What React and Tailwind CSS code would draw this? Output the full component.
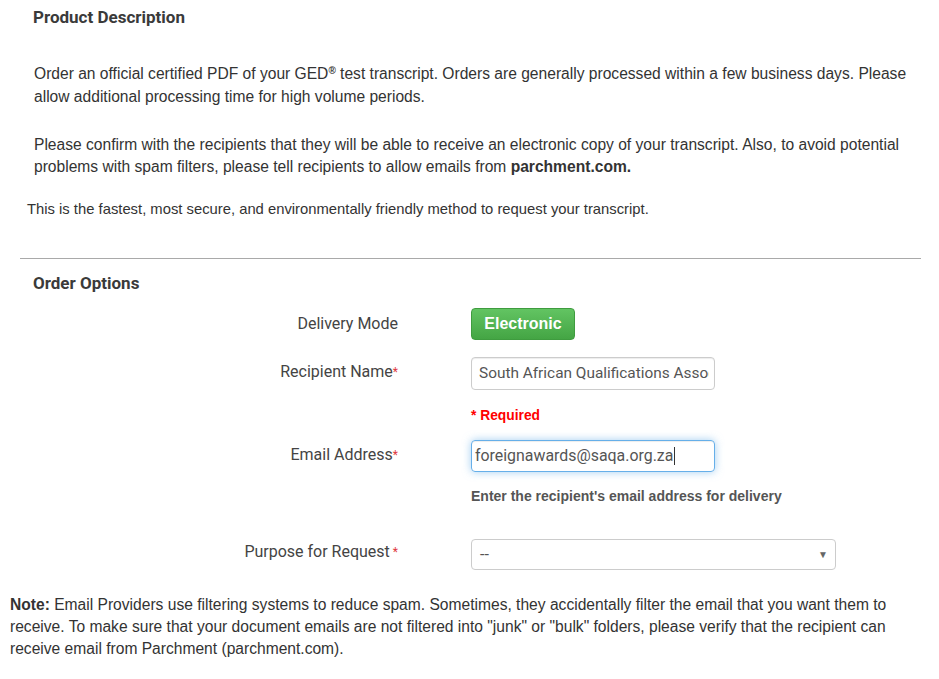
import React from 'react';

const Label = ({ children, required, spaced, pt }) => (
  <div className={`w-[398px] shrink-0 text-right text-[16px] leading-[20px] text-[#444] ${pt}`} style={{ fontFamily: 'Roboto, sans-serif' }}>
    {children}
    {required && <span className="text-[#e0393e] text-[12px] align-top">{spaced ? ' *' : '*'}</span>}
  </div>
);

export default function App() {
  return (
    <div className="w-[939px] h-[679px] overflow-hidden bg-white text-[#333]" style={{ fontFamily: '"Liberation Sans", Arial, sans-serif' }}>
      <h2 className="pl-[33px] pt-[5px] text-[17px] leading-[24px] font-bold text-[#3a3a3a]" style={{ fontFamily: 'Roboto, sans-serif' }}>
        Product Description
      </h2>

      <p className="mt-[33px] pl-[34px] pr-[8px] text-[15.6px] leading-[23px]">
        Order an official certified PDF of your GED<sup className="text-[10px] font-bold">®</sup> test transcript. Orders are generally processed within a few business days. Please allow additional processing time for high volume periods.
      </p>

      <p className="mt-[26px] pl-[34px] pr-[8px] text-[15.6px] leading-[22px]">
        Please confirm with the recipients that they will be able to receive an electronic copy of your transcript. Also, to avoid potential problems with spam filters, please tell recipients to allow emails from <b>parchment.com.</b>
      </p>

      <p className="mt-[21px] pl-[27px] text-[14.8px] leading-[20px]">
        This is the fastest, most secure, and environmentally friendly method to request your transcript.
      </p>

      <hr className="mt-[39px] ml-[20px] w-[901px] border-0 border-t border-[#a9a9a9]" />

      <h2 className="pl-[33px] mt-[12px] text-[17px] leading-[24px] font-bold text-[#3a3a3a]" style={{ fontFamily: 'Roboto, sans-serif' }}>
        Order Options
      </h2>

      <div className="mt-[13px] flex flex-col">
        <div className="flex items-start gap-[73px]">
          <Label pt="pt-[6px]">Delivery Mode</Label>
          <button className="h-[32px] w-[104px] rounded-[4px] border border-[#3f9c3f] bg-gradient-to-b from-[#62c462] to-[#44a544] text-[16px] font-bold text-white">
            Electronic
          </button>
        </div>

        <div className="mt-[17px] flex items-start gap-[73px]">
          <Label required pt="pt-[5px]">Recipient Name</Label>
          <div>
            <div className="h-[33px] w-[244px] rounded-[4px] border border-[#ccc] pl-[7px] pr-[5px] text-[15.4px] leading-[31px] text-[#555] shadow-[inset_0_1px_1px_rgba(0,0,0,0.075)]" style={{ fontFamily: 'Roboto, sans-serif' }}>
              <div className="overflow-hidden whitespace-nowrap">South African Qualifications Association</div>
            </div>
            <div className="mt-[18px] text-[13.8px] leading-[16px] font-bold text-[#f00]">* Required</div>
          </div>
        </div>

        <div className="mt-[16px] flex items-start gap-[73px]">
          <Label required pt="pt-[5px]">Email Address</Label>
          <div>
            <div className="h-[32px] w-[244px] overflow-hidden whitespace-nowrap rounded-[4px] border border-[#66afe9] px-[3px] text-[15.9px] leading-[30px] text-[#555] shadow-[inset_0_1px_1px_rgba(0,0,0,0.075),0_0_8px_rgba(102,175,233,0.6)]" style={{ fontFamily: 'Roboto, sans-serif' }}>
              foreignawards@saqa.org.za<span className="ml-px inline-block h-[18px] w-px translate-y-[4px] bg-[#333]" />
            </div>
            <div className="mt-[16px] text-[14px] leading-[16px] font-bold text-[#555]">Enter the recipient's email address for delivery</div>
          </div>
        </div>

        <div className="mt-[35px] flex items-start gap-[73px]">
          <Label required spaced pt="pt-[3px]">Purpose for Request</Label>
          <div className="flex h-[31px] w-[365px] items-center justify-between rounded-[4px] border border-[#ccc] pl-[8px] pr-[7px] text-[#555]" style={{ fontFamily: 'Roboto, sans-serif' }}>
            <span className="text-[16px]">--</span>
            <span className="text-[10px] text-[#666]">▼</span>
          </div>
        </div>
      </div>

      <p className="mt-[24px] pl-[10px] pr-[30px] text-[15.6px] leading-[22px]">
        <b>Note:</b> Email Providers use filtering systems to reduce spam. Sometimes, they accidentally filter the email that you want them to receive. To make sure that your document emails are not filtered into "junk" or "bulk" folders, please verify that the recipient can receive email from Parchment (parchment.com).
      </p>
    </div>
  );
}
